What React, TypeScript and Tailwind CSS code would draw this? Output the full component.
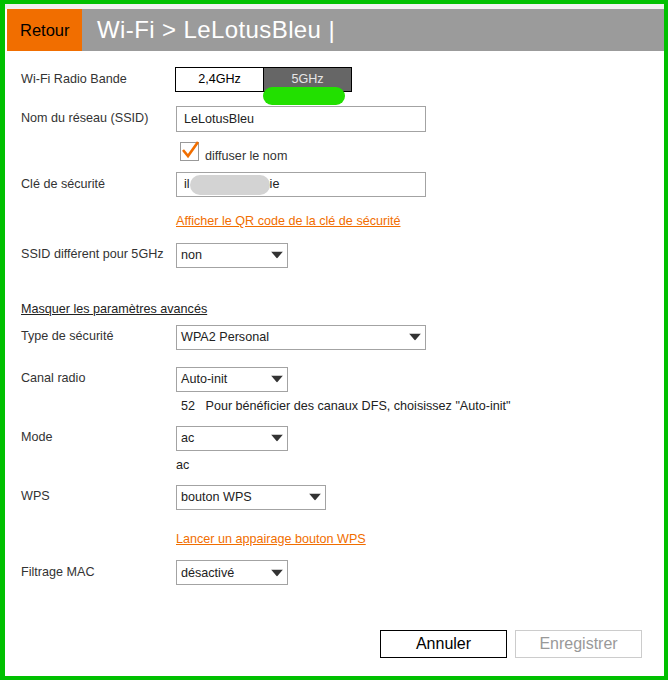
import React from 'react';

const font = { fontFamily: '"Liberation Sans", Arial, sans-serif' };

function Caret() {
  return (
    <svg width="12" height="7" viewBox="0 0 12 7" className="absolute right-[4px] top-1/2 -translate-y-1/2">
      <path d="M0 0 H12 L6 7 Z" fill="#333" />
    </svg>
  );
}

function Select({ value, width }: { value: string; width: string }) {
  return (
    <div className={`relative h-[25px] border border-[#a3a3a3] bg-white flex items-center pl-[4px] text-[#222] ${width}`}>
      {value}
      <Caret />
    </div>
  );
}

function Row({ label, children, className = '' }: { label?: string; children: React.ReactNode; className?: string }) {
  return (
    <div className={`flex items-center ${className}`}>
      <div className="w-[155px] shrink-0 text-[#333] -mt-[1px]">{label}</div>
      {children}
    </div>
  );
}

export default function App() {
  return (
    <div
      style={font}
      className="w-[668px] h-[680px] border-t-[4px] border-l-[5px] border-r-[4px] border-b-[4px] border-[#00c000] bg-white text-[12.6px] overflow-hidden"
    >
      {/* Header */}
      <div className="h-[5px] bg-[#f0f0f0]" />
      <div className="flex h-[42px] ml-[2px]">
        <div className="w-[75px] bg-[#f16e00] flex items-center pl-[13px] text-[16.5px] text-black">Retour</div>
        <div className="flex-1 bg-[#9b9b9b] flex items-center pl-[15px] text-[24px] tracking-[0.4px] text-white">Wi-Fi &gt; LeLotusBleu |</div>
      </div>

      <div className="pl-[16px]">
        {/* Band toggle */}
        <Row label="Wi-Fi Radio Bande" className="mt-[16px]">
          <div className="relative flex -ml-[1px]">
            <div className="w-[89px] h-[25px] border border-black flex items-center justify-center text-black">2,4GHz</div>
            <div className="w-[88px] h-[25px] border border-l-0 border-black bg-[#666] flex items-center justify-center text-[#e6e6e6]">5GHz</div>
            <div className="absolute left-[88px] top-[20px] w-[82px] h-[18px] rounded-full bg-[#22e000]" />
          </div>
        </Row>

        <Row label="Nom du réseau (SSID)" className="mt-[14px]">
          <div className="w-[250px] h-[26px] border border-[#a3a3a3] flex items-center pl-[7px] text-[#222]">LeLotusBleu</div>
        </Row>

        <div className="flex items-end ml-[159px] mt-[10px]">
          <div className="relative w-[19px] h-[19px] border border-[#999] bg-white">
            <svg width="20" height="18" viewBox="0 0 20 18" className="absolute left-[0px] -top-[2px]">
              <path d="M2 9 L7 15 L17 1" stroke="#f16e00" strokeWidth="2.6" fill="none" strokeLinejoin="miter" />
            </svg>
          </div>
          <span className="ml-[6px] text-[#333] leading-[15px] -mb-[3px]">diffuser le nom</span>
        </div>

        <Row label="Clé de sécurité" className="mt-[11px]">
          <div className="w-[250px] h-[25px] border border-[#a3a3a3] flex items-center pl-[7px] text-[#222]">
            il
            <span className="inline-block w-[80px] h-[20px] rounded-full bg-[#d3d3d3]" />
            ie
          </div>
        </Row>

        <div className="ml-[155px] mt-[15px] text-[#f16e00] underline">Afficher le QR code de la clé de sécurité</div>

        <Row label="SSID différent pour 5GHz" className="mt-[12px]">
          <Select value="non" width="w-[112px]" />
        </Row>

        <div className="mt-[32px] text-[#222] underline">Masquer les paramètres avancés</div>

        <Row label="Type de sécurité" className="mt-[6px]">
          <Select value="WPA2 Personal" width="w-[250px]" />
        </Row>

        <Row label="Canal radio" className="mt-[17px]">
          <Select value="Auto-init" width="w-[112px]" />
        </Row>
        <div className="ml-[160px] mt-[5px] text-[#222] whitespace-pre">52   Pour bénéficier des canaux DFS, choisissez "Auto-init"</div>

        <Row label="Mode" className="mt-[10px]">
          <Select value="ac" width="w-[112px]" />
        </Row>
        <div className="ml-[155px] mt-[5px] text-[#222]">ac</div>

        <Row label="WPS" className="mt-[10px]">
          <Select value="bouton WPS" width="w-[150px]" />
        </Row>

        <div className="ml-[155px] mt-[20px] text-[#f16e00] underline">Lancer un appairage bouton WPS</div>

        <Row label="Filtrage MAC" className="mt-[12px]">
          <Select value="désactivé" width="w-[112px]" />
        </Row>

        {/* Actions */}
        <div className="flex justify-end gap-[8px] mt-[45px] mr-[22px]">
          <button className="w-[127px] h-[28px] border border-black bg-white text-[16px] text-black">Annuler</button>
          <button className="w-[127px] h-[28px] border border-[#ccc] bg-white text-[16px] text-[#999]">Enregistrer</button>
        </div>
      </div>
    </div>
  );
}
